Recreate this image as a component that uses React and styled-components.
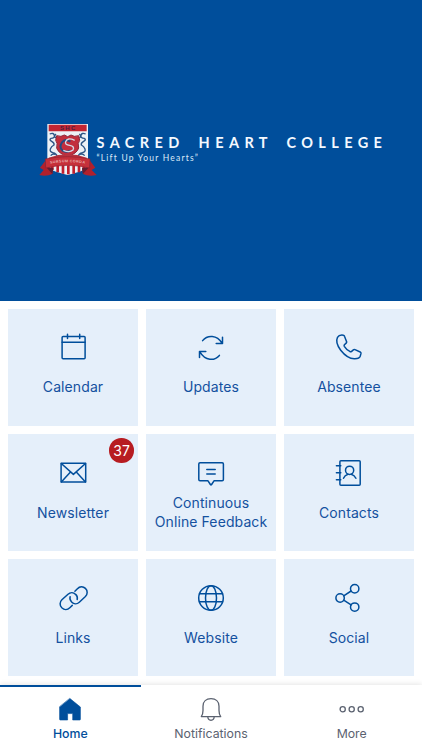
import React from "react";
import styled, { createGlobalStyle, css } from "styled-components";

const colors = {
  brand: "#004e9b",
  ink: "#14519f",
  tile: "#e5effa",
  badge: "#b71c21",
  muted: "#5b6270",
};

const GlobalStyle = createGlobalStyle`
  * {
    box-sizing: border-box;
  }

  body {
    margin: 0;
    background: #fff;
    font-family: Inter, "Liberation Sans", sans-serif;
  }
`;

const Screen = styled.div`
  display: flex;
  flex-direction: column;
  width: 422px;
  height: 750px;
  overflow: hidden;
  background: #fff;
`;

const Hero = styled.header`
  display: flex;
  flex: none;
  align-items: flex-start;
  height: 300.5px;
  padding: 115px 0 0 30px;
  background: ${colors.brand};
`;

const CrestSvg = styled.svg`
  flex: none;
  width: 75px;
  height: 70px;
`;

const Wordmark = styled.div`
  margin: 18px 0 0 -8.5px;
  color: #f4f9ff;
  font-family: Lato, sans-serif;
  white-space: nowrap;
`;

const SchoolName = styled.h1`
  margin: 0;
  font-size: 14.5px;
  font-weight: 700;
  line-height: 19px;
  letter-spacing: 5.4px;
  word-spacing: 5px;
`;

const Motto = styled.p`
  margin: 0;
  font-size: 8.5px;
  line-height: 12px;
  letter-spacing: 1.2px;
  color: #dceaf8;
`;

const Grid = styled.main`
  display: grid;
  flex: 1;
  grid-template-columns: repeat(3, 1fr);
  grid-auto-rows: 117px;
  align-content: start;
  gap: 8.3px;
  padding: 8.3px 8.2px 0;
`;

const Tile = styled.a`
  position: relative;
  display: flex;
  flex-direction: column;
  align-items: center;
  padding-top: 23px;
  background: ${colors.tile};
  color: ${colors.ink};
`;

const TileIcon = styled.svg`
  flex: none;
  width: 32px;
  height: 32px;
  fill: none;
  stroke: ${colors.brand};
  stroke-width: 1.5;
  stroke-linecap: round;
  stroke-linejoin: round;
`;

const TileLabel = styled.span`
  display: flex;
  align-items: center;
  height: 38px;
  margin-top: 4.7px;
  font-size: 14px;
  line-height: 18.5px;
  letter-spacing: 0.1px;
  text-align: center;
  white-space: pre-line;
`;

const Badge = styled.span`
  position: absolute;
  top: 4px;
  right: 4px;
  display: flex;
  align-items: center;
  justify-content: center;
  width: 24.5px;
  height: 24.5px;
  border-radius: 50%;
  background: ${colors.badge};
  color: #fff;
  font-size: 14px;
`;

const TabBar = styled.nav`
  display: grid;
  flex: none;
  grid-template-columns: repeat(3, 1fr);
  height: 65.5px;
  background: #fff;
  box-shadow: 0 0 6px rgba(0, 0, 0, 0.14);
`;

const Tab = styled.a`
  display: flex;
  flex-direction: column;
  align-items: center;
  padding-top: 10px;
  border-top: 2.4px solid transparent;
  color: ${colors.muted};
  font-size: 12.3px;
  line-height: 17px;

  ${({ $active }) =>
    $active &&
    css`
      border-top-color: ${colors.brand};
      color: ${colors.brand};
      font-weight: 500;
    `}
`;

const TabIcon = styled.svg`
  width: 28px;
  height: 28px;
  fill: none;
  stroke: currentColor;
  stroke-width: 1.3;
  stroke-linecap: round;
  stroke-linejoin: round;
`;

const Crest = () => (
  <CrestSvg viewBox="0 0 225 210">
    <path d="M52 27H174V150Q174 166 113 180Q52 166 52 150Z" fill="#edf1f6" />
    <path d="M56 29H170V49H56Z" fill="#c32532" />
    <text
      x="115"
      y="46"
      textAnchor="middle"
      fontFamily="Liberation Sans, sans-serif"
      fontWeight="700"
      fontSize="18"
      letterSpacing="4"
      fill="#4a2040"
    >
      SHC
    </text>
    {/* scrollwork on both sides of the inner shield */}
    <g fill="none" stroke="#2c5485" strokeWidth="4">
      <path d="M59 57q12-5 14 4t-10 9q-7 4 2 9t7 11q-8 4-11 12t8 11q10 2 13 12M78 57q-8 8 0 12M62 122q6-7 14-4" />
      <path d="M167 57q-12-5-14 4t10 9q7 4-2 9t-7 11q8 4 11 12t-8 11q-10 2-13 12M148 57q8 8 0 12M164 122q-6-7-14-4" />
    </g>
    <path
      d="M80 62Q94 67 103 60L113 65L123 60Q132 67 146 62L149 76Q142 84 146 99Q141 116 113 124Q85 116 80 99Q84 84 77 76Z"
      fill="#c22e3d"
      stroke="#8e2437"
      strokeWidth="3"
    />
    <path
      d="M121 80Q105 70 96 82Q86 98 98 107Q110 114 121 107"
      fill="none"
      stroke="#234b80"
      strokeWidth="6"
    />
    <path
      d="M134 76Q112 66 107 80Q104 90 119 91Q135 94 129 105Q119 114 100 106"
      fill="none"
      stroke="#d4dce8"
      strokeWidth="4"
    />
    <path d="M56 128Q113 108 170 128V145H56Z" fill="#b8323e" />
    <path
      d="M67 150V165M83 150V172M99 151V176M115 151V178M131 151V176M147 150V172M161 150V165"
      stroke="#c01e2d"
      strokeWidth="8"
    />
    <path
      d="M46 137L30 158L41 165L28 180Q49 185 67 177L70 160L46 154Z"
      fill="#b0202d"
    />
    <path
      d="M180 137L196 158L185 165L200 180Q177 185 159 177L156 160L180 154Z"
      fill="#b0202d"
    />
    <path d="M46 154L70 160L67 177ZM180 154L156 160L159 177Z" fill="#641d31" />
    <path
      d="M46 132Q113 118 180 132L179 159Q113 143 47 159Z"
      fill="#c6303a"
      stroke="#94202d"
      strokeWidth="2"
    />
    <path id="ribbon" d="M58 147Q113 136 168 147" fill="none" />
    <text
      fontFamily="Liberation Sans, sans-serif"
      fontWeight="700"
      fontSize="11"
      letterSpacing="1.2"
      fill="#e8b1b0"
    >
      <textPath href="#ribbon" startOffset="50%" textAnchor="middle">
        SURSUM CORDA
      </textPath>
    </text>
  </CrestSvg>
);

const icons = {
  calendar: (
    <>
      <rect x="5.1" y="4.6" width="23" height="22.2" rx="1" />
      <path d="M5.1 10.3H28.1M10.5 2.2V6.6M22.7 2.2V6.6" />
    </>
  ),
  updates: (
    <>
      <path d="M7.6 8.6C12.4 2.7 22 2.6 27 11.2M27.5 5.3V11.6H21.2" />
      <path d="M24.4 23.4C19.6 29 10.2 29 5 20.2M4.5 25.6V19.4H10.8" />
    </>
  ),
  phone: (
    <path d="M10.3 3.2C8 2.9 5.4 3.7 4.5 5.3C3 8.5 4.1 13.5 7.7 18.2C11.8 23.4 16.6 26.6 21.3 26.8C24.2 26.9 26.6 26.2 27.2 24.3L28 21.4C28.1 20.7 27.8 20.3 27.2 20L22 17.6C21.3 17.3 20.8 17.4 20.3 17.9L18.4 19.6C17.9 19.8 17.3 19.8 16.8 19.4C14.7 18.3 12.5 16.2 11.3 14.3C11 13.7 11 13.3 11.4 12.8L13.4 10.9C13.8 10.4 13.8 10 13.5 9.4L11.5 4.2C11.3 3.6 11 3.3 10.3 3.2Z" />
  ),
  mail: (
    <>
      <rect x="4.1" y="6.3" width="24.6" height="18.8" rx="0.3" />
      <path d="M4.3 6.5L16.4 17.4L28.5 6.5M4.3 24.9L13.5 15M28.5 24.9L19.3 15" />
    </>
  ),
  feedback: (
    <>
      <path d="M5 5.7H27.2Q28.4 5.7 28.4 6.9V22.6Q28.4 23.8 27.2 23.8H19L16.6 27.5Q16 28.3 15.4 27.5L13 23.8H5Q3.8 23.8 3.8 22.6V6.9Q3.8 5.7 5 5.7Z" />
      <path d="M11.8 12.4H20.2M11.8 17H20.2" />
    </>
  ),
  contacts: (
    <>
      <rect x="6.9" y="3.8" width="20.3" height="24.4" rx="1" />
      <path d="M3.4 8.7H7.8M3.4 15.7H7.8M3.4 22.7H7.8" />
      <circle cx="16.6" cy="13.3" r="4.1" />
      <path d="M10.5 21.3Q11.7 18.3 15 17.3M18.2 17.3Q21.5 18.3 22.9 21.3" />
    </>
  ),
  links: (
    <>
      <path d="M17.9 9.2L20.4 6.7C22.7 4.4 26.1 4.2 28.4 6.4C30.8 8.7 30.7 12.2 28.4 14.5L22.3 20.2C20 22.3 16.7 22.2 14.6 20C13.1 18.5 12.6 16.8 13.1 14.8" />
      <path d="M15.3 23.4L12.8 25.7C10.5 28 7.1 28 4.8 25.8C2.5 23.5 2.6 20 4.9 17.8L11 12.2C13.3 10.1 16.6 10.2 18.7 12.4C20.2 13.9 20.7 15.6 20.2 17.6" />
    </>
  ),
  website: (
    <>
      <circle cx="16" cy="16" r="12.3" />
      <ellipse cx="16" cy="16" rx="5.5" ry="12.3" />
      <path d="M4.5 11.7H27.5M4.5 19.8H27.5" />
    </>
  ),
  social: (
    <>
      <circle cx="21.7" cy="6.8" r="4.2" />
      <circle cx="7.1" cy="16" r="4.2" />
      <circle cx="21.7" cy="25.1" r="4.2" />
      <path d="M10.7 13.8L18.1 9M10.7 18.2L18.1 22.9" />
    </>
  ),
};

const tiles = [
  { icon: "calendar", label: "Calendar" },
  { icon: "updates", label: "Updates" },
  { icon: "phone", label: "Absentee" },
  { icon: "mail", label: "Newsletter", badge: 37 },
  { icon: "feedback", label: "Continuous\nOnline Feedback" },
  { icon: "contacts", label: "Contacts" },
  { icon: "links", label: "Links" },
  { icon: "website", label: "Website" },
  { icon: "social", label: "Social" },
];

const App = () => {
  return (
    <>
      <GlobalStyle />
      <Screen>
        <Hero>
          <Crest />
          <Wordmark>
            <SchoolName>SACRED HEART COLLEGE</SchoolName>
            <Motto>“Lift Up Your Hearts”</Motto>
          </Wordmark>
        </Hero>

        <Grid>
          {tiles.map(({ icon, label, badge }) => (
            <Tile key={label}>
              <TileIcon viewBox="0 0 32 32">{icons[icon]}</TileIcon>
              <TileLabel>{label}</TileLabel>
              {badge && <Badge>{badge}</Badge>}
            </Tile>
          ))}
        </Grid>

        <TabBar>
          <Tab $active>
            <TabIcon viewBox="0 0 28 28">
              <path
                d="M14 1.6L24.4 10V22.3Q24.4 23 23.7 23H16.7V16.6H11.6V23H4.3Q3.6 23 3.6 22.3V10Z"
                fill="currentColor"
                strokeWidth="0.6"
              />
            </TabIcon>
            Home
          </Tab>
          <Tab>
            <TabIcon viewBox="0 0 28 28">
              <path d="M4.3 19.6Q6 17.2 6 13.5V9.2C6 4.5 9.2 1.7 14 1.7S22 4.5 22 9.2V13.5Q22 17.2 23.7 19.6Z" />
              <path d="M10.8 19.8C11 24.4 17 24.4 17.2 19.8" />
            </TabIcon>
            Notifications
          </Tab>
          <Tab>
            <TabIcon viewBox="0 0 28 28">
              <circle cx="4.7" cy="12.2" r="2.6" />
              <circle cx="13.7" cy="12.2" r="2.6" />
              <circle cx="22.7" cy="12.2" r="2.6" />
            </TabIcon>
            More
          </Tab>
        </TabBar>
      </Screen>
    </>
  );
};

export default App;
